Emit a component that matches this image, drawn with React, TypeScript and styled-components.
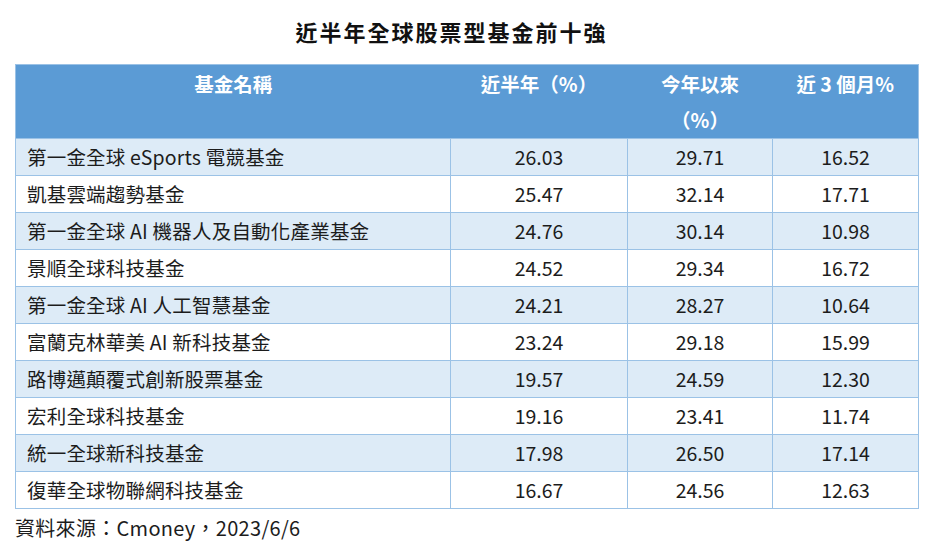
import React from "react";
import styled, { createGlobalStyle } from "styled-components";

const Global = createGlobalStyle`
  html, body { margin: 0; padding: 0; background: #ffffff; }
  body { font-family: "Noto Sans CJK TC", "Noto Sans", sans-serif; color: #1c1c1c; }
`;

const Page = styled.div`
  width: 935px;
  height: 556px;
  padding: 0 17px 0 15px;
  box-sizing: border-box;
`;

const Title = styled.h1`
  margin: 0;
  height: 64px;
  display: flex;
  align-items: center;
  justify-content: center;
  padding-right: 30px;
  font-size: 22px;
  font-weight: 700;
  letter-spacing: 2px;
  color: #111;
  line-height: 1;
  box-sizing: border-box;
  padding-bottom: 2px;
`;

const Table = styled.table`
  width: 903px;
  border-collapse: collapse;
  table-layout: fixed;
  border: 1px solid #9bc2e6;
`;

const HeadRow = styled.tr`
  background: #5b9bd5;
`;

const HeadCell = styled.th`
  height: 70px;
  padding: 1px 4px 0;
  box-sizing: border-box;
  vertical-align: top;
  color: #ffffff;
  font-size: 19.5px;
  font-weight: 700;
  line-height: 36px;
  text-align: center;
  border: 0;
`;

const Row = styled.tr<{ $alt: boolean }>`
  background: ${(p) => (p.$alt ? "#ddebf7" : "#ffffff")};
`;

const Cell = styled.td<{ $name?: boolean }>`
  height: 37px;
  padding: 0 0 0 ${(p) => (p.$name ? "11px" : "0")};
  box-sizing: border-box;
  border: 1px solid #9bc2e6;
  font-size: 19.5px;
  letter-spacing: ${(p) => (p.$name ? "0.2px" : "0")};
  line-height: 1;
  text-align: ${(p) => (p.$name ? "left" : "center")};
  white-space: nowrap;
  color: #1c1c1c;
`;

const Source = styled.div`
  margin-top: 7px;
  font-size: 20px;
  letter-spacing: 0.3px;
  line-height: 24px;
  color: #1c1c1c;
`;

const rows: [string, string, string, string][] = [
  ["第一金全球 eSports 電競基金", "26.03", "29.71", "16.52"],
  ["凱基雲端趨勢基金", "25.47", "32.14", "17.71"],
  ["第一金全球 AI 機器人及自動化產業基金", "24.76", "30.14", "10.98"],
  ["景順全球科技基金", "24.52", "29.34", "16.72"],
  ["第一金全球 AI 人工智慧基金", "24.21", "28.27", "10.64"],
  ["富蘭克林華美 AI 新科技基金", "23.24", "29.18", "15.99"],
  ["路博邁顛覆式創新股票基金", "19.57", "24.59", "12.30"],
  ["宏利全球科技基金", "19.16", "23.41", "11.74"],
  ["統一全球新科技基金", "17.98", "26.50", "17.14"],
  ["復華全球物聯網科技基金", "16.67", "24.56", "12.63"],
];

export default function App() {
  return (
    <Page>
      <Global />
      <Title>近半年全球股票型基金前十強</Title>
      <Table>
        <colgroup>
          <col style={{ width: 435 }} />
          <col style={{ width: 177 }} />
          <col style={{ width: 145 }} />
          <col style={{ width: 146 }} />
        </colgroup>
        <thead>
          <HeadRow>
            <HeadCell>基金名稱</HeadCell>
            <HeadCell>近半年（%）</HeadCell>
            <HeadCell>
              今年以來
              <br />
              （%）
            </HeadCell>
            <HeadCell>近 3 個月%</HeadCell>
          </HeadRow>
        </thead>
        <tbody>
          {rows.map((r, i) => (
            <Row key={r[0]} $alt={i % 2 === 0}>
              <Cell $name>{r[0]}</Cell>
              <Cell>{r[1]}</Cell>
              <Cell>{r[2]}</Cell>
              <Cell>{r[3]}</Cell>
            </Row>
          ))}
        </tbody>
      </Table>
      <Source>資料來源：Cmoney，2023/6/6</Source>
    </Page>
  );
}
